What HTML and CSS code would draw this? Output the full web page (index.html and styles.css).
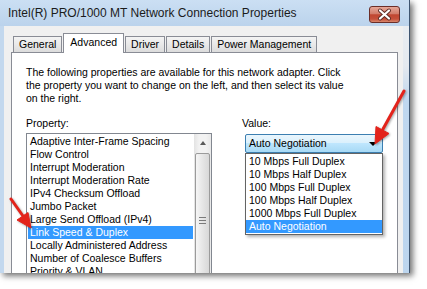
FILE: index.html
```html
<!DOCTYPE html>
<html lang="en">
<head>
    <meta charset="UTF-8">
    <title>Intel(R) PRO/1000 MT Network Connection Properties</title>
    <link rel="stylesheet" href="styles.css">
</head>
<body>
    <div class="window">
        <div class="titlebar">
            <span class="title">Intel(R) PRO/1000 MT Network Connection Properties</span>
            <span class="close">
                <svg width="29" height="15" viewBox="0 0 29 15">
                    <path d="M10 3.5 L19 11.5 M19 3.5 L10 11.5" stroke="#5a2a24" stroke-width="4" stroke-linecap="round"/>
                    <path d="M10 3.5 L19 11.5 M19 3.5 L10 11.5" stroke="#ffffff" stroke-width="2.2" stroke-linecap="round"/>
                </svg>
            </span>
        </div>

        <div class="frame">
            <div class="client">
                <div class="tabs">
                    <div class="tab">General</div>
                    <div class="tab active">Advanced</div>
                    <div class="tab">Driver</div>
                    <div class="tab">Details</div>
                    <div class="tab">Power Management</div>
                </div>

                <div class="panel">
                    <p class="intro">The following properties are available for this network adapter. Click<br>
                    the property you want to change on the left, and then select its value<br>
                    on the right.</p>

                    <div class="props">
                        <div class="col">
                            <div class="label">Property:</div>
                            <div class="listbox">
                                <div class="items">
                                    <div class="item">Adaptive Inter-Frame Spacing</div>
                                    <div class="item">Flow Control</div>
                                    <div class="item">Interrupt Moderation</div>
                                    <div class="item">Interrupt Moderation Rate</div>
                                    <div class="item">IPv4 Checksum Offload</div>
                                    <div class="item">Jumbo Packet</div>
                                    <div class="item">Large Send Offload (IPv4)</div>
                                    <div class="item selected">Link Speed &amp; Duplex</div>
                                    <div class="item">Locally Administered Address</div>
                                    <div class="item">Number of Coalesce Buffers</div>
                                    <div class="item">Priority &amp; VLAN</div>
                                </div>
                                <div class="scrollbar">
                                    <div class="sb-up"><span class="sb-arrow"></span></div>
                                    <div class="sb-thumb"><span class="grip"></span></div>
                                </div>
                            </div>
                        </div>

                        <div class="col">
                            <div class="label">Value:</div>
                            <div class="combo-wrap">
                                <div class="combo">Auto Negotiation<span class="combo-arrow"></span></div>
                                <div class="dropdown">
                                    <div class="option">10 Mbps Full Duplex</div>
                                    <div class="option">10 Mbps Half Duplex</div>
                                    <div class="option">100 Mbps Full Duplex</div>
                                    <div class="option">100 Mbps Half Duplex</div>
                                    <div class="option">1000 Mbps Full Duplex</div>
                                    <div class="option selected">Auto Negotiation</div>
                                </div>
                            </div>
                        </div>
                    </div>
                </div>
            </div>
            <div class="edge"></div>
        </div>
    </div>

    <!-- rode pijlen als annotatie over het venster -->
    <svg class="arrows" width="427" height="289" viewBox="0 0 427 289">
        <g fill="#e3231b" stroke="#e3231b">
            <path d="M404 91 L383 129" stroke-width="3" stroke-linecap="round" fill="none"/>
            <path d="M375 144 L376 126.5 L389 133.5 Z" stroke-width="1" stroke-linejoin="round"/>
            <path d="M11 199 L23 216" stroke-width="3" stroke-linecap="round" fill="none"/>
            <path d="M31 228 L17 220 L28 212.5 Z" stroke-width="1" stroke-linejoin="round"/>
        </g>
    </svg>
</body>
</html>
```

FILE: styles.css
```css
* {
    box-sizing: border-box;
}

body {
    margin: 0;
    width: 427px;
    height: 289px;
    overflow: hidden;
    position: relative;
    background-color: #ffffff;
    font-family: "Liberation Sans", Arial, sans-serif;
    font-size: 10.5px;
    color: #000000;
}

.window {
    width: 410px;
    height: 273px;
    display: flex;
    flex-direction: column;
    background-color: #c3d8ee;
    border-right: 1px solid #3e5570;
    box-shadow: 3px 3px 6px rgba(0,0,0,0.55);
    overflow: hidden;
}

.titlebar {
    height: 26px;
    flex: none;
    display: flex;
    align-items: center;
    justify-content: space-between;
    padding: 0 9px 0 8px;
    background: linear-gradient(#cbdff3, #bbd3ec);
}

.title {
    font-size: 12px;
    color: #1b1b1b;
}

.close {
    width: 31px;
    height: 17px;
    margin-top: 2px;
    border: 1px solid #6b2e28;
    border-radius: 3px;
    background: linear-gradient(#e6a899, #d27d6b 45%, #c04631 52%, #c5503a 80%, #d8876c);
    display: flex;
}

.frame {
    flex: 1;
    display: flex;
    padding-left: 4px;
}

.client {
    flex: 1;
    display: flex;
    flex-direction: column;
    background-color: #f0f0f0;
}

.edge {
    width: 9px;
    background: linear-gradient(#e9edf2 0, #e4e9ef 40px, #bfd7ef 75px, #bcd5ee);
}

/* tabs */
.tabs {
    display: flex;
    align-items: flex-end;
    height: 20px;
    margin: 7px 0 -1px 9px;
    position: relative;
    z-index: 1;
}

.tab {
    height: 16px;
    margin-bottom: 1px;
    padding: 0 5px;
    line-height: 15px;
    border: 1px solid #898c95;
    border-bottom: none;
    background: linear-gradient(#f4f4f4, #e9e9e9 50%, #dcdcdc);
    white-space: nowrap;
}

.tab + .tab {
    margin-left: 1px;
}

.tab.active {
    height: 20px;
    margin-bottom: 0;
    padding: 0 6px;
    line-height: 16px;
    background: #ffffff;
}

.panel {
    flex: 1;
    margin: 0 5px 0 7px;
    padding: 13px 14px 0 14px;
    background-color: #ffffff;
    border: 1px solid #898c95;
    border-bottom: none;
}

.intro {
    margin: 0;
    line-height: 13px;
    white-space: nowrap;
}

.props {
    display: grid;
    grid-template-columns: 186px 1fr;
    column-gap: 30px;
    margin-top: 12px;
}

.label {
    line-height: 13px;
}

/* property list */
.listbox {
    display: flex;
    height: 160px;
    margin-top: 3px;
    border: 1px solid #828790;
}

.items {
    flex: 1;
    padding: 1px;
}

.item {
    height: 13px;
    line-height: 13px;
    padding-left: 2px;
    white-space: nowrap;
}

.item.selected,
.option.selected {
    background-color: #3399ff;
    color: #ffffff;
}

.scrollbar {
    width: 17px;
    display: flex;
    flex-direction: column;
    background: linear-gradient(to right, #e3e3e3, #f2f2f2 30%, #f2f2f2 70%, #e8e8e8);
}

.sb-up {
    height: 17px;
    display: flex;
    justify-content: center;
    align-items: center;
}

.sb-arrow {
    width: 0;
    height: 0;
    border-left: 3px solid transparent;
    border-right: 3px solid transparent;
    border-bottom: 4px solid #595959;
}

.sb-thumb {
    height: 134px;
    margin: 2px 1px 0 1px;
    display: flex;
    justify-content: center;
    align-items: center;
    border: 1px solid #9b9b9b;
    border-radius: 2px;
    background: linear-gradient(to right, #f6f6f6, #e6e6e6 50%, #d8d8d8);
}

.grip {
    width: 7px;
    height: 7px;
    border-top: 1px solid #7a7a7a;
    border-bottom: 1px solid #7a7a7a;
    background: linear-gradient(transparent 2px, #7a7a7a 2px, #7a7a7a 3px, transparent 3px);
}

/* value combo */
.combo-wrap {
    position: relative;
    width: 138px;
    margin: 4px 0 0 3px;
}

.combo {
    position: relative;
    height: 19px;
    padding-left: 3px;
    line-height: 17px;
    border: 1px solid #3c7fb1;
    border-radius: 2px;
    background: linear-gradient(#eaf6fd, #d9f0fc 50%, #bee6fd 50%, #a7d9f5);
}

.combo-arrow {
    position: absolute;
    right: 5px;
    top: 7px;
    width: 0;
    height: 0;
    border-left: 4px solid transparent;
    border-right: 4px solid transparent;
    border-top: 4px solid #000000;
}

.dropdown {
    position: absolute;
    top: 19px;
    left: 0;
    width: 138px;
    padding: 1px 0;
    background-color: #ffffff;
    border: 1px solid #646464;
    box-shadow: 2px 2px 3px rgba(0,0,0,0.3);
    z-index: 2;
}

.option {
    height: 13px;
    line-height: 13px;
    margin: 0;
    padding-left: 3px;
    white-space: nowrap;
}

.arrows {
    position: absolute;
    left: 0;
    top: 0;
    pointer-events: none;
    filter: drop-shadow(1px 1px 1px rgba(0,0,0,0.35));
}
```
